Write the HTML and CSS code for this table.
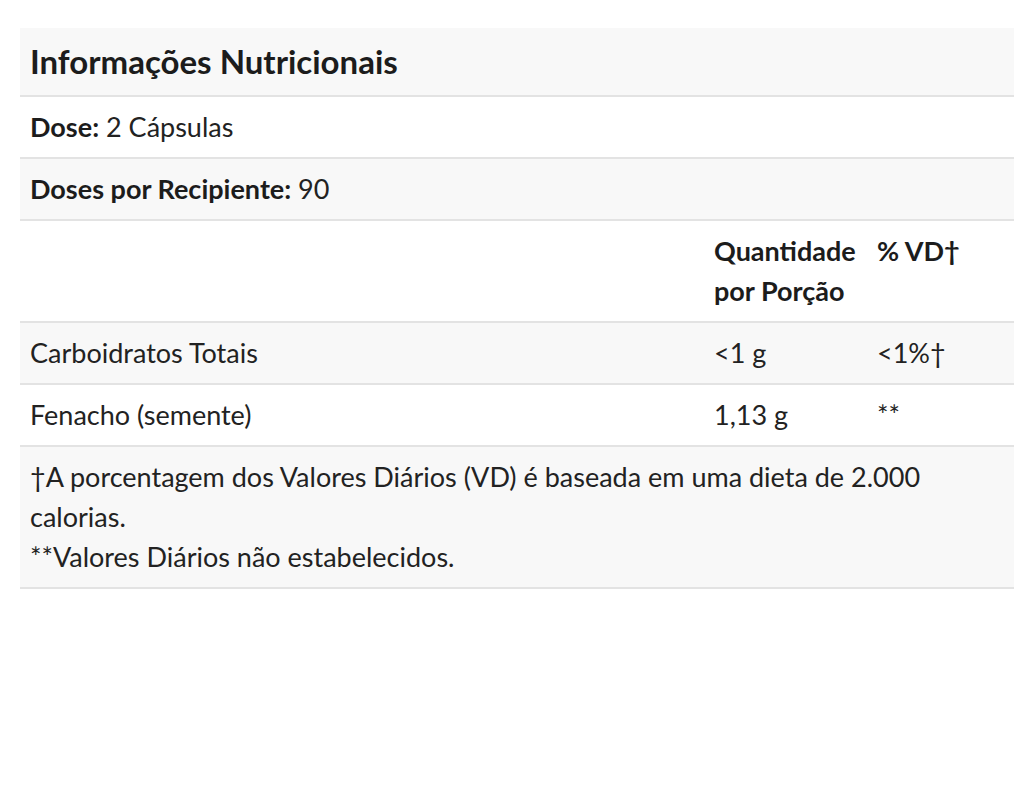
FILE: index.html
```html
<!DOCTYPE html>
<html lang="pt-BR">
<head>
<meta charset="utf-8">
<title>Informações Nutricionais</title>
<link rel="stylesheet" href="styles.css">
</head>
<body>
<div class="page">
  <table class="facts">
    <colgroup>
      <col class="c-name">
      <col class="c-qty">
      <col class="c-vd">
    </colgroup>
    <tr class="shade title-row"><th colspan="3" class="title">Informações Nutricionais</th></tr>
    <tr><td colspan="3"><strong>Dose:</strong> 2 Cápsulas</td></tr>
    <tr class="shade"><td colspan="3"><strong>Doses por Recipiente:</strong> 90</td></tr>
    <tr class="head"><td></td><td><strong>Quantidade por Porção</strong></td><td><strong>% VD†</strong></td></tr>
    <tr class="shade"><td>Carboidratos Totais</td><td>&lt;1 g</td><td>&lt;1%†</td></tr>
    <tr><td>Fenacho (semente)</td><td>1,13 g</td><td>**</td></tr>
    <tr class="shade"><td colspan="3" class="notes">†A porcentagem dos Valores Diários (VD) é baseada em uma dieta de 2.000 calorias.<br>**Valores Diários não estabelecidos.</td></tr>
  </table>
</div>
</body>
</html>
```

FILE: styles.css
```css
html, body {
  margin: 0;
  padding: 0;
  background: #ffffff;
}

.page {
  padding: 28px 16px 0 20px;
  font-family: Lato, "Noto Sans", sans-serif;
  color: #222222;
}

.facts {
  width: 994px;
  border-collapse: collapse;
  table-layout: fixed;
  font-size: 27px;
  line-height: 40px;
}

.c-name { width: 684px; }
.c-qty { width: 163px; }
.c-vd { width: 147px; }

.facts td,
.facts th {
  padding: 10px;
  text-align: left;
  vertical-align: top;
  border-bottom: 2px solid #e3e3e3;
}

.shade td,
.shade th {
  background: #f8f8f8;
}

.title {
  font-size: 33px;
  font-weight: 700;
  line-height: 47px;
  color: #1c1c1c;
}

strong {
  font-weight: 700;
  color: #1c1c1c;
}
```
